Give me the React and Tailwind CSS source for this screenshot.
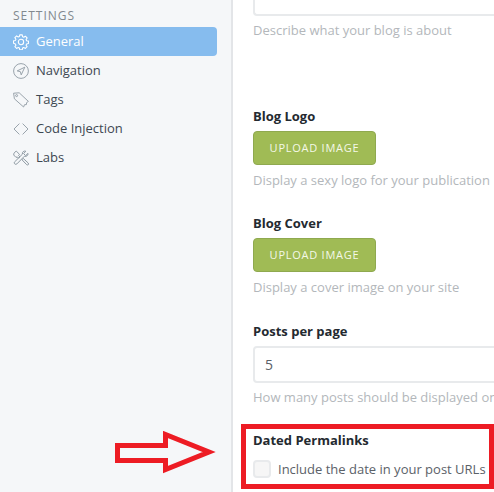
function GearIcon() {
  return (
    <svg viewBox="0 0 18 18" className="h-4 w-4" fill="none" stroke="currentColor" strokeWidth="1.2">
      <path d="M7.6 1h2.8l.4 2.1 1.3.6 1.8-1.2 2 2-1.200 1.800.6 1.300 2.100.4v2.800l-2.100.4-.6 1.300 1.200 1.800-2 2-1.800-1.200-1.300.6-.4 2.100H7.600l-.4-2.100-1.300-.6-1.800 1.200-2-2 1.200-1.800-.6-1.300L.6 10.400V7.600l2.100-.4.6-1.300-1.200-1.800 2-2 1.800 1.200 1.300-.6z" strokeLinejoin="round" />
      <circle cx="9" cy="9" r="3" />
    </svg>
  );
}

function CompassIcon() {
  return (
    <svg viewBox="0 0 16 16" className="h-4 w-4" fill="none" stroke="currentColor" strokeWidth="0.9">
      <circle cx="8" cy="8" r="7.400" />
      <path d="M11.800 4.200 4.200 7.900l3.200.8.800 3.200z" strokeLinejoin="round" />
    </svg>
  );
}

function TagIcon() {
  return (
    <svg viewBox="0 0 16 16" className="h-4 w-4" fill="none" stroke="currentColor" strokeWidth="0.9">
      <path d="M.6 1.200 6.200.8l9.200 8.600-1.800 1.200-.2 2-1.900.1-.9 2.300L1.400 6.800z" strokeLinejoin="round" />
      <circle cx="3.600" cy="3.600" r="1" />
    </svg>
  );
}

function CodeIcon() {
  return (
    <svg viewBox="0 0 16 12" className="h-3 w-4" fill="none" stroke="currentColor" strokeWidth="0.9">
      <path d="M6.400.6 1 6l5.400 5.400M9.600.6 15 6l-5.400 5.400" />
    </svg>
  );
}

function ToolsIcon() {
  return (
    <svg viewBox="0 0 16 16" className="h-4 w-4" fill="none" stroke="currentColor" strokeWidth="1">
      <path d="M1 3.200 3.200 1l3.300 3.300-.9 1.300 1.300 1.300L5.600 8.200 4.300 6.900 3 7.400.7 5z" strokeLinejoin="round" />
      <path d="M15 3.400 12.600 5.600 10.600 3.600 12.800 1.200c-2-.7-3.900.9-3.400 3L2 11.500c-1.800 1-.2 3.900 1.900 2.400l7.400-7.600c2.100.6 4.100-1 3.700-2.900z" strokeLinejoin="round" />
      <path d="M9 9.800l4.700 4.900c1.300.9 2.500-.4 1.500-1.700l-4.900-4.500z" strokeLinejoin="round" />
    </svg>
  );
}

function NavItem({ icon, label, active }) {
  return (
    <div className={`flex h-[29px] w-[217px] items-center rounded-r-[4px] pl-[13px] ${active ? 'bg-[#86bcee] text-white' : 'text-[#3d4852]'}`}>
      <span className={`flex w-[23px] shrink-0 ${active ? 'text-white' : 'text-[#8e9aa3]'}`}>{icon}</span>
      <span className="text-[13px] leading-none">{label}</span>
    </div>
  );
}

function UploadButton() {
  return (
    <button className="mt-[6px] block h-[34px] w-[123px] rounded-[4px] border border-[#8fa94f] bg-[#a0bb55] pt-[1px] text-[11px] tracking-[0.75px] text-[#f4f8e8]">
      UPLOAD IMAGE
    </button>
  );
}

function Label({ children, className = '' }) {
  return <div className={`text-[13px] font-bold leading-[18px] text-[#242a30] ${className}`}>{children}</div>;
}

function Help({ children, className = '' }) {
  return <div className={`whitespace-nowrap text-[13px] leading-[20px] text-[#b3b7bb] ${className}`}>{children}</div>;
}

export default function App() {
  return (
    <div className="relative flex h-[492px] w-[494px] overflow-hidden bg-white font-['Open_Sans',sans-serif]">
      <aside className="h-full w-[233px] shrink-0 border-r-2 border-[#e3e5e8] bg-[#f5f7f9]">
        <div className="pl-[13px] pt-[8px] text-[12px] leading-[16px] tracking-[1px] text-[#82898f]">SETTINGS</div>
        <nav className="mt-[3px]">
          <NavItem active icon={<GearIcon />} label="General" />
          <NavItem icon={<CompassIcon />} label="Navigation" />
          <NavItem icon={<TagIcon />} label="Tags" />
          <NavItem icon={<CodeIcon />} label="Code Injection" />
          <NavItem icon={<ToolsIcon />} label="Labs" />
        </nav>
      </aside>

      <main className="min-w-0 flex-1 pl-[20px]">
        <div className="h-[16px] w-[300px] rounded-bl-[4px] border-b-2 border-l-2 border-[#e8eaec]" />
        <Help className="mt-[4px]">Describe what your blog is about</Help>

        <Label className="mt-[67px]">Blog Logo</Label>
        <UploadButton />
        <Help className="mt-[5px]">Display a sexy logo for your publication</Help>

        <Label className="mt-[24px]">Blog Cover</Label>
        <UploadButton />
        <Help className="mt-[5px]">Display a cover image on your site</Help>

        <Label className="mt-[25px]">Posts per page</Label>
        <div className="mt-[6px] flex h-[37px] w-[300px] items-center rounded-l-[4px] border-2 border-[#e8eaec] pl-[10px] text-[14px] text-[#5b6168]">5</div>
        <Help className="mt-[4px]">How many posts should be displayed on each page</Help>

        <Label className="mt-[24px]">Dated Permalinks</Label>
        <div className="mt-[11px] flex items-center">
          <span className="h-[18px] w-[18px] shrink-0 rounded-[4px] border-2 border-[#e8eaec] bg-[#f6f6f6]" />
          <span className="ml-[7px] whitespace-nowrap text-[13px] leading-[18px] text-[#5b6168]">Include the date in your post URLs</span>
        </div>
      </main>

      {/* annotation drawn over the page */}
      <div className="absolute left-[241px] top-[424px] h-[65px] w-[253px] border-[5px] border-[#ed1c24]" />
      <svg className="absolute left-[115px] top-[431px]" width="103" height="44" viewBox="0 0 103 44" fill="none">
        <path d="M2.500 14.500H50.500V3.500L94 21 50.500 38.500V29.500H2.500z" stroke="#ed1c24" strokeWidth="5" />
      </svg>
    </div>
  );
}
